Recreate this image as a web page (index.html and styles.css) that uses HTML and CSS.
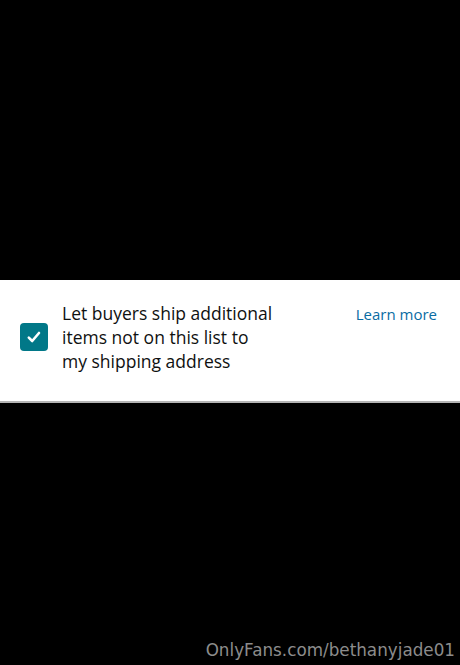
FILE: index.html
```html
<!DOCTYPE html>
<html lang="en">
<head>
<meta charset="UTF-8">
<meta name="viewport" content="width=device-width, initial-scale=1.0">
<link rel="stylesheet" href="styles.css">
<title>Wish list settings</title>
</head>
<body>
  <div class="screen">
    <div class="spacer"></div>

    <div class="option">
      <label class="check">
        <span class="box">
          <svg width="16" height="16" viewBox="0 0 16 16">
            <path d="M2.8 8.6 L6.2 12 L13 4" fill="none" stroke="#fff" stroke-width="2.6" stroke-linecap="round" stroke-linejoin="round"/>
          </svg>
        </span>
        <span class="label">Let buyers ship additional items not on this list to my shipping address</span>
      </label>
      <a class="learn" href="#">Learn more</a>
    </div>

    <p class="mark">OnlyFans.com/bethanyjade01</p>
  </div>
</body>
</html>
```

FILE: styles.css
```css
body {
  margin: 0;
  padding: 0;
  background-color: #000;
  font-family: "Open Sans", "Noto Sans", sans-serif;
}

.screen {
  height: 665px;
  display: flex;
  flex-direction: column;
}

.spacer {
  height: 280px;
  flex-shrink: 0;
}

.option {
  background-color: #fff;
  height: 121px;
  flex-shrink: 0;
  border-bottom: 2px solid #b5b5b5;
  display: flex;
  align-items: flex-start;
  justify-content: space-between;
  padding: 0 23px 0 20px;
}

.check {
  display: flex;
  align-items: center;
  gap: 14px;
  margin-top: 21px;
}

.box {
  width: 28px;
  height: 28px;
  border-radius: 4px;
  background-color: #017888;
  display: flex;
  align-items: center;
  justify-content: center;
  flex-shrink: 0;
}

.label {
  width: 212px;
  font-size: 17.5px;
  line-height: 24px;
  color: #0f1111;
}

.learn {
  margin-top: 24px;
  font-size: 15px;
  color: #0a6ca3;
  text-decoration: none;
}

.mark {
  margin: auto 5px 5px 0;
  text-align: right;
  font-family: "DejaVu Sans", sans-serif;
  font-size: 16.8px;
  color: #8c8c8c;
}
```
